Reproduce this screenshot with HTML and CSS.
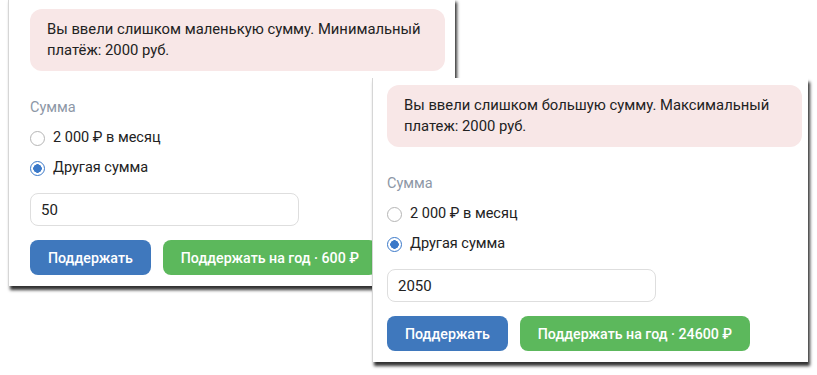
FILE: index.html
```html
<!DOCTYPE html>
<html>
<head>
<meta charset='utf-8'>
<title>Поддержать</title>
<link rel="stylesheet" href="styles.css">
</head>
<body>

<div class='shot shot-small'>
	<div class='alert'>Вы ввели слишком маленькую сумму. Минимальный платёж: 2000 руб.</div>
	<div class='label'>Сумма</div>
	<label class='opt'><input type='radio' name='a1'> 2 000 ₽ в месяц</label>
	<label class='opt'><input type='radio' name='a1' checked> Другая сумма</label>
	<input class='amount' value='50'>
	<div class='btns'>
		<button class='btn blue'>Поддержать</button>
		<button class='btn green'>Поддержать на год · 600 ₽</button>
	</div>
</div>

<div class='shot shot-big'>
	<div class='alert'>Вы ввели слишком большую сумму. Максимальный платеж: 2000 руб.</div>
	<div class='label'>Сумма</div>
	<label class='opt'><input type='radio' name='a2'> 2 000 ₽ в месяц</label>
	<label class='opt'><input type='radio' name='a2' checked> Другая сумма</label>
	<input class='amount' value='2050'>
	<div class='btns'>
		<button class='btn blue'>Поддержать</button>
		<button class='btn green'>Поддержать на год · 24600 ₽</button>
	</div>
</div>

</body>
</html>
```

FILE: styles.css
```css
body, html {
	margin: 0;
	background: white;
	font-family: Roboto, "Liberation Sans", sans-serif;
	font-size: 14.5px;
	color: #222;
}

body {
	position: relative;
	width: 817px;
	height: 375px;
	overflow: hidden;
}

/* two screenshots laid on one canvas */
.shot {
	position: absolute;
	background: white;
	border-left: 1px solid #d6d6d6;
	box-shadow: 2px 4px 3px rgba(0, 0, 0, 0.8);
	display: flex;
	flex-direction: column;
	align-items: flex-start;
}
.shot-small {
	left: 8px;
	top: -2px;
	width: 415px;
	height: 277px;
	padding: 11px 10px 0 21px;
}
.shot-big {
	left: 372px;
	top: 78px;
	width: 415px;
	height: 277px;
	padding: 7px 6px 0 14px;
	z-index: 2;
}

.alert {
	box-sizing: border-box;
	width: 415px;
	height: 62px;
	padding: 10px 17px;
	background: #f8e7e7;
	border-radius: 12px;
	font-size: 14.8px;
	line-height: 21px;
}

.label {
	margin-top: 27px;
	line-height: 20px;
	color: #8d97a6;
}

.opt {
	display: flex;
	align-items: center;
	gap: 8px;
	margin-top: 10px;
	line-height: 20px;
}

.opt input {
	appearance: none;
	margin: 0;
	width: 15px;
	height: 15px;
	border: 1px solid #b5b5b5;
	border-radius: 50%;
	background: white;
}
.opt input:checked {
	border: 1px solid #3b79c9;
	background: radial-gradient(circle, #3b79c9 0 4px, white 4.5px);
}

.amount {
	box-sizing: border-box;
	margin-top: 15px;
	width: 269px;
	height: 33px;
	padding: 0 10px;
	border: 1px solid #dedede;
	border-radius: 8px;
	font: 15px Roboto, "Liberation Sans", sans-serif;
	color: #222;
}

.btns {
	display: flex;
	gap: 12px;
	margin-top: 14px;
}

.btn {
	height: 35px;
	padding: 0 18px;
	border: 0;
	border-radius: 8px;
	color: white;
	font: 500 14.2px Roboto, "Liberation Sans", sans-serif;
	white-space: nowrap;
}
.blue {
	background: #3f78bd;
}
.green {
	background: #5cb85c;
}
```
